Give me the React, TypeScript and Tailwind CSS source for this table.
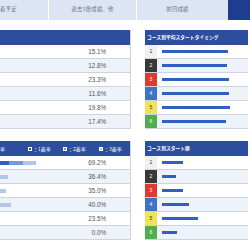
import React from "react";

const jp = { fontFamily: '"Noto Sans CJK JP", "Noto Sans", sans-serif' };
const num = { fontFamily: '"Liberation Sans", Arial, sans-serif' };

const topPct = ["15.1%", "12.8%", "23.3%", "11.6%", "19.8%", "17.4%"];
const botPct = ["69.2%", "36.4%", "35.0%", "40.0%", "23.5%", "0.0%"];
const botBars: [number, number, number][] = [
  [9, 14, 13],
  [0, 0, 8],
  [0, 0, 6],
  [0, 0, 11],
  [0, 0, 0],
  [0, 0, 0],
];
const boxes = [
  { bg: "bg-[#f1f1f1]", fg: "text-[#333]" },
  { bg: "bg-[#383838]", fg: "text-white" },
  { bg: "bg-[#e03a30]", fg: "text-white" },
  { bg: "bg-[#3e72c6]", fg: "text-white" },
  { bg: "bg-[#efe35a]", fg: "text-[#333]" },
  { bg: "bg-[#4fae4f]", fg: "text-white" },
];
const topBars = [66, 65, 67, 67, 68, 64];
const botBarsR = [21, 14, 21, 27, 36, 15];

function rowBg(i: number) {
  return i % 2 === 1 ? "bg-[#eef2fa]" : "bg-white";
}

function RightPanel({ title, bars }: { title: string; bars: number[] }) {
  return (
    <div className="flex flex-col">
      <div
        className="h-[15px] bg-[#2d4e9e] text-white text-[4.7px] font-bold flex items-center pl-[2px] tracking-[0.1px]"
        style={jp}
      >
        {title}
      </div>
      {bars.map((w, i) => (
        <div key={i} className={`h-[14px] flex border-b border-[#cfd4dc] ${rowBg(i)}`}>
          <div
            className={`w-[12px] shrink-0 flex items-center justify-center text-[5px] ${boxes[i].bg} ${boxes[i].fg}`}
            style={num}
          >
            {i + 1}
          </div>
          <div className="flex-1 flex items-center pl-[5px]">
            <div className="h-[3px] bg-[#2f5fbf]" style={{ width: `${w}px` }} />
          </div>
        </div>
      ))}
    </div>
  );
}

export default function App() {
  return (
    <div className="w-[250px] h-[250px] overflow-hidden bg-white relative">
      {/* tabs */}
      <div className="flex h-[20px] text-[#6b7690] text-[5.3px] tracking-[0.3px]" style={jp}>
        <div className="w-[49px] bg-[#dde5f4] flex items-center border-r border-white">
          <span>着予定</span>
        </div>
        <div className="w-[88px] bg-[#dde5f4] flex items-center justify-center border-r border-white">
          過去3節成績、他
        </div>
        <div className="w-[91px] bg-[#dde5f4] flex items-center justify-center pr-[10px]">
          前回成績
        </div>
        <div className="flex-1 bg-[#1e3d8f]" />
      </div>

      <div className="flex mt-[10px]">
        {/* left column */}
        <div className="w-[131px] flex flex-col">
          <div className="border-r border-[#cfd4dc]">
            <div className="h-[15px] bg-[#2d4e9e]" />
            {topPct.map((p, i) => (
              <div
                key={i}
                className={`h-[14px] flex items-center justify-end pr-[24px] border-b border-[#cfd4dc] text-[6.3px] text-[#555] ${rowBg(i)}`}
                style={num}
              >
                {p}
              </div>
            ))}
          </div>

          <div className="mt-[12px] border-r border-[#cfd4dc]">
            <div
              className="h-[15px] bg-[#2d4e9e] text-white text-[5px] flex items-center"
              style={jp}
            >
              <span className="w-[28px]">率</span>
              <span className="w-[35px] flex items-center gap-[1px]">
                <span className="w-[4px] h-[4px] border-[0.7px] border-white bg-[#2d4e9e]" />
                <span>：1着率</span>
              </span>
              <span className="w-[36px] flex items-center gap-[1px]">
                <span className="w-[4px] h-[4px] border-[0.7px] border-white bg-[#7499d8]" />
                <span>：2着率</span>
              </span>
              <span className="flex items-center gap-[1px]">
                <span className="w-[4px] h-[4px] border-[0.7px] border-white bg-[#b3c6ea]" />
                <span>：3着率</span>
              </span>
            </div>
            {botPct.map((p, i) => (
              <div
                key={i}
                className={`h-[14px] flex items-center border-b border-[#cfd4dc] ${rowBg(i)}`}
              >
                <div className="flex h-[4px] w-[50px]">
                  {botBars[i][0] > 0 && (
                    <div className="h-full bg-[#2f5fbf]" style={{ width: `${botBars[i][0]}px` }} />
                  )}
                  {botBars[i][1] > 0 && (
                    <div className="h-full bg-[#7499d8]" style={{ width: `${botBars[i][1]}px` }} />
                  )}
                  {botBars[i][2] > 0 && (
                    <div className="h-full bg-[#b3c6ea]" style={{ width: `${botBars[i][2]}px` }} />
                  )}
                </div>
                <div
                  className="flex-1 text-right pr-[24px] text-[6.3px] text-[#555]"
                  style={num}
                >
                  {p}
                </div>
              </div>
            ))}
          </div>
        </div>

        {/* right column */}
        <div className="ml-[14px] w-[103px] flex flex-col">
          <RightPanel title="コース別平均スタートタイミング" bars={topBars} />
          <div className="mt-[12px]">
            <RightPanel title="コース別スタート順" bars={botBarsR} />
          </div>
        </div>
      </div>
    </div>
  );
}
